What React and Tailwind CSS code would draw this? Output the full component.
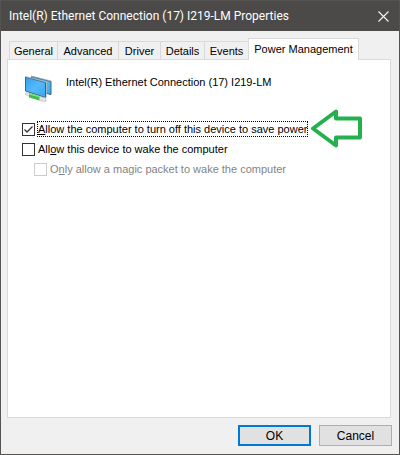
import { useState } from "react";

const tabs = [
  { name: "General", width: "w-[49px]" },
  { name: "Advanced", width: "w-[62px]" },
  { name: "Driver", width: "w-[43px]" },
  { name: "Details", width: "w-[45px]" },
  { name: "Events", width: "w-[45px]" },
  { name: "Power Management", width: "w-[111px]" },
];

function AdapterIcon() {
  return (
    <svg className="h-8 w-8 shrink-0" viewBox="0 0 32 32" aria-hidden="true">
      <defs>
        <linearGradient id="screen" x1="0" y1="0" x2="1" y2="1">
          <stop offset="0" stopColor="#2f9fe8" />
          <stop offset="0.5" stopColor="#55b9fa" />
          <stop offset="1" stopColor="#35a7f2" />
        </linearGradient>
      </defs>
      <path d="M9.500 4.500 29 9.500v13L9.500 18z" fill="url(#screen)" stroke="#3f627c" />
      <path d="M9 4 29.500 9" stroke="#aab5bb" strokeWidth="0.800" />
      <path d="M3.500 5 23.500 10.500v15L3.500 19z" fill="url(#screen)" stroke="#3f627c" />
      <path d="M3.500 4.500 24.500 10V25" fill="none" stroke="#b4bec4" strokeWidth="0.800" />
      <path d="M3.500 20.500 8 21.500v3l-4.500-1.500z" fill="#dfe3e3" stroke="#c2c8ca" strokeWidth="0.600" />
      <path d="M7 21 17.500 24v4.500L7 25.500z" fill="#3fbb51" />
      <path d="M7 21 17.500 24v1.500L7 22.500z" fill="#7be487" />
      <path d="M17.500 24.500 24 26v3.500l-6.500-1z" fill="#e3e6e6" stroke="#a9afb1" strokeWidth="0.600" />
    </svg>
  );
}

function CheckRow({ id, checked, onChange, disabled, focused, className = "", children }) {
  return (
    <div className={`flex h-4 items-center ${className}`}>
      <span className="relative mr-0.5 h-[13px] w-[13px] shrink-0">
        <input
          id={id}
          type="checkbox"
          checked={checked}
          onChange={onChange}
          disabled={disabled}
          className="block h-[13px] w-[13px] appearance-none border border-[#333] bg-white outline-none disabled:border-[#ccc]"
        />
        {checked && (
          <svg className="pointer-events-none absolute inset-0" viewBox="0 0 13 13" aria-hidden="true">
            <path d="M2.500 6.500 5 9l5.500-5.500" fill="none" stroke="#333" strokeWidth="1.300" />
          </svg>
        )}
      </span>
      <label
        htmlFor={id}
        className={`border border-dotted leading-[14px] whitespace-nowrap ${focused ? "border-black" : "border-transparent"} ${disabled ? "text-[#838383]" : "text-black"}`}
      >
        {children}
      </label>
    </div>
  );
}

export default function App() {
  const [sleep, setSleep] = useState(true);
  const [wake, setWake] = useState(false);

  return (
    <main className="flex min-h-screen flex-col border border-[#555453] bg-[#f0f0f0] font-['Liberation_Sans',sans-serif] text-[11px] leading-4 text-black">
      <header className="flex h-[30px] items-center justify-between bg-[#4b4a48] pr-2.5 pl-2 text-white">
        <h1 className="font-[Roboto,sans-serif] text-xs whitespace-nowrap">
          Intel(R) Ethernet Connection (17) I219-LM Properties
        </h1>
        <button type="button" aria-label="Close">
          <svg className="h-[11px] w-[11px]" viewBox="0 0 11 11" aria-hidden="true">
            <path d="m.5.5 10 10m0-10-10 10" stroke="#f2f2f2" strokeWidth="1.200" />
          </svg>
        </button>
      </header>

      <div className="flex grow flex-col pt-[7px] pr-2 pl-1.5">
        <div role="tablist" className="flex items-end pl-[3px]">
          {tabs.map((tab, i) => {
            const active = i === 5;
            return (
              <button
                key={tab.name}
                type="button"
                role="tab"
                aria-selected={active}
                className={`-ml-px border border-b-0 border-[#d9d9d9] whitespace-nowrap ${tab.width} ${
                  active ? "z-10 -mb-px h-[22px] bg-white pb-0.5" : "h-[18px] bg-[#f0f0f0]"
                }`}
              >
                {tab.name}
              </button>
            );
          })}
        </div>

        <section role="tabpanel" className="grow border border-[#d9d9d9] bg-white pt-3 pl-3.5">
          <div className="flex items-start gap-3">
            <AdapterIcon />
            <p className="pt-0.5 leading-4">Intel(R) Ethernet Connection (17) I219-LM</p>
          </div>
          <div className="mt-[5px] flex items-start gap-0.5">
            <div className="flex flex-col gap-1 pt-3">
              <CheckRow id="sleep" checked={sleep} onChange={() => setSleep(!sleep)} focused>
                <span className="underline">A</span>llow the computer to turn off this device to save power
              </CheckRow>
              <CheckRow id="wake" checked={wake} onChange={() => setWake(!wake)}>
                All<span className="underline">o</span>w this device to wake the computer
              </CheckRow>
              <CheckRow id="magic" checked={false} onChange={() => {}} disabled className="pl-3">
                O<span className="underline">n</span>ly allow a magic packet to wake the computer
              </CheckRow>
            </div>
            <svg className="h-10 w-[54px] shrink-0" viewBox="0 0 54 40" aria-hidden="true">
              <path
                d="M3 19.500 26 2.500v7h24v19H26v8z"
                fill="none"
                stroke="#22b14c"
                strokeWidth="4"
                strokeLinejoin="round"
              />
            </svg>
          </div>
        </section>
      </div>

      <footer className="flex h-9 items-start justify-end gap-2 pt-[7px] pr-[7px] text-xs">
        <button type="button" className="h-[21px] w-[73px] border-2 border-[#0078d7] bg-[#e1e1e1] leading-4">
          OK
        </button>
        <button type="button" className="h-[21px] w-[73px] border border-[#adadad] bg-[#e1e1e1] leading-4">
          Cancel
        </button>
      </footer>
    </main>
  );
}
